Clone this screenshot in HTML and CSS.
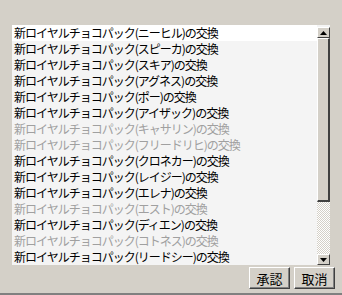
FILE: index.html
```html
<!DOCTYPE html>
<html lang="ja">
<head>
<meta charset="utf-8">
<link rel="stylesheet" href="styles.css">
</head>
<body>
<div class="dialog">
  <div class="listwrap">
    <ul class="list">
      <li class="row sel">新ロイヤルチョコパック(ニーヒル)の交換</li>
      <li class="row">新ロイヤルチョコパック(スピーカ)の交換</li>
      <li class="row">新ロイヤルチョコパック(スキア)の交換</li>
      <li class="row">新ロイヤルチョコパック(アグネス)の交換</li>
      <li class="row">新ロイヤルチョコパック(ポー)の交換</li>
      <li class="row">新ロイヤルチョコパック(アイザック)の交換</li>
      <li class="row dis">新ロイヤルチョコパック(キャサリン)の交換</li>
      <li class="row dis">新ロイヤルチョコパック(フリードリヒ)の交換</li>
      <li class="row">新ロイヤルチョコパック(クロネカー)の交換</li>
      <li class="row">新ロイヤルチョコパック(レイジー)の交換</li>
      <li class="row">新ロイヤルチョコパック(エレナ)の交換</li>
      <li class="row dis">新ロイヤルチョコパック(エスト)の交換</li>
      <li class="row">新ロイヤルチョコパック(ディエン)の交換</li>
      <li class="row dis">新ロイヤルチョコパック(コトネス)の交換</li>
      <li class="row">新ロイヤルチョコパック(リードシー)の交換</li>
    </ul>
    <div class="scrollbar">
      <div class="sbtn up"><svg width="7" height="4" viewBox="0 0 7 4"><polygon points="3.5,0 7,4 0,4" fill="#000"/></svg></div>
      <div class="thumb"></div>
      <div class="track"></div>
      <div class="sbtn down"><svg width="7" height="4" viewBox="0 0 7 4"><polygon points="0,0 7,0 3.5,4" fill="#000"/></svg></div>
    </div>
  </div>
  <div class="buttons">
    <button class="btn">承認</button>
    <button class="btn">取消</button>
  </div>
</div>
</body>
</html>
```
FILE: styles.css
```css
html, body {
  margin: 0;
  padding: 0;
}
body {
  width: 342px;
  height: 295px;
  background: #d4d0c8;
  font-family: "Noto Sans CJK JP", "DejaVu Sans", sans-serif;
  font-size: 12px;
  overflow: hidden;
}
.dialog {
  padding-top: 25px;
  box-sizing: border-box;
  height: 295px;
  border-bottom: 2px solid #808080;
}
.listwrap {
  display: flex;
  margin-left: 12px;
  width: 318px;
  height: 240px;
}
.list {
  list-style: none;
  margin: 0;
  padding: 0;
  width: 305px;
  background: #f4f4f4;
}
.row {
  height: 16px;
  line-height: 15px;
  padding-left: 2px;
  letter-spacing: -1px;
  color: #000;
  white-space: nowrap;
  overflow: hidden;
}
.row.sel {
  background: #fff;
}
.row.dis {
  color: #a0a0a0;
}
.scrollbar {
  width: 13px;
  display: flex;
  flex-direction: column;
  padding-top: 2px;
  background: #f4f4f4;
}
.sbtn {
  height: 9px;
  background: #d4d0c8;
  border-top: 1px solid #fff;
  border-left: 1px solid #fff;
  border-right: 1px solid #404040;
  border-bottom: 1px solid #404040;
  display: flex;
  align-items: center;
  justify-content: center;
}
.thumb {
  height: 161px;
  background: #d4d0c8;
  border-top: 1px solid #fff;
  border-left: 1px solid #fff;
  border-right: 2px solid #404040;
  border-bottom: 2px solid #404040;
}
.track {
  flex: 1;
  background-color: #fff;
  background-image: repeating-conic-gradient(#d4d0c8 0 25%, #fff 0 50%);
  background-size: 2px 2px;
}
.buttons {
  display: flex;
  justify-content: flex-end;
  gap: 4px;
  margin-top: 2px;
  margin-right: 7px;
}
.btn {
  width: 41px;
  height: 22px;
  padding: 0;
  margin: 0;
  background: #d4d0c8;
  font-family: "Noto Sans CJK JP", sans-serif;
  font-size: 13px;
  color: #000;
  border-top: 1px solid #fff;
  border-left: 1px solid #fff;
  border-right: 1px solid #404040;
  border-bottom: 1px solid #404040;
  box-shadow: inset -1px -1px 0 #808080;
}
```
